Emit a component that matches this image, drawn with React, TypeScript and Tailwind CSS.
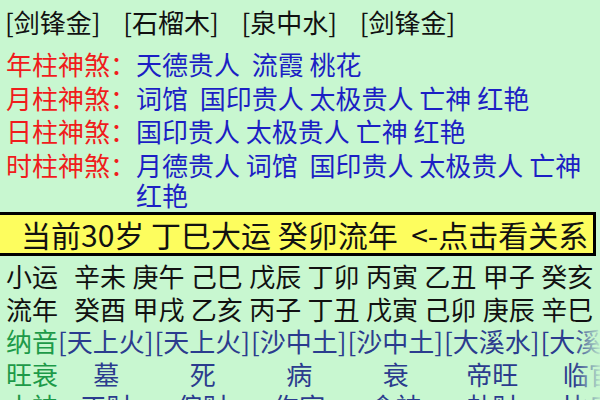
const nayin = ['[剑锋金]', '[石榴木]', '[泉中水]', '[剑锋金]']

const shensha = [
  { label: '年柱神煞：', text: '天德贵人  流霞 桃花' },
  { label: '月柱神煞：', text: '词馆  国印贵人 太极贵人 亡神 红艳' },
  { label: '日柱神煞：', text: '国印贵人 太极贵人 亡神 红艳' },
  { label: '时柱神煞：', text: '月德贵人 词馆  国印贵人 太极贵人 亡神 红艳' },
]

const xiaoyun = ['辛未', '庚午', '己巳', '戊辰', '丁卯', '丙寅', '乙丑', '甲子', '癸亥']
const liunian = ['癸酉', '甲戌', '乙亥', '丙子', '丁丑', '戊寅', '己卯', '庚辰', '辛巳']
const nayinRow = ['[天上火]', '[天上火]', '[沙中土]', '[沙中土]', '[大溪水]', '[大溪水]']
const wangshuai = ['墓', '死', '病', '衰', '帝旺', '临官']
const shishen = ['正财', '偏财', '伤官', '食神', '劫财', '比肩']

function GanzhiRow({ label, items }: { label: string; items: string[] }) {
  return (
    <div className="flex pl-[6px] whitespace-nowrap">
      <span className="w-[68px] shrink-0">{label}</span>
      {items.map((s, i) => (
        <span key={i} className="w-[58.4px] shrink-0">
          {s}
        </span>
      ))}
    </div>
  )
}

function TableRow({ label, items, center }: { label: string; items: string[]; center?: boolean }) {
  return (
    <div className="flex pl-[6px] whitespace-nowrap">
      <span className="w-[52px] shrink-0 text-[#1d9a48]">{label}</span>
      {items.map((s, i) => (
        <span
          key={i}
          className={`w-[96.5px] shrink-0 text-[#2b3c8e] ${center ? 'text-center' : 'text-left'}`}
        >
          {s}
        </span>
      ))}
    </div>
  )
}

export default function App() {
  return (
    <div className="w-[600px] h-[400px] overflow-hidden bg-[#c8f7d0] font-['Noto_Sans_CJK_SC','Liberation_Sans',sans-serif] text-[26px] leading-[30px] text-[#111] pt-[7px]">
      {/* 纳音 */}
      <div className="flex gap-[22.7px] pl-[5px] whitespace-nowrap">
        {nayin.map((n, i) => (
          <span key={i}>{n}</span>
        ))}
      </div>

      {/* 神煞 */}
      <div className="mt-[12px] flex flex-col gap-[3.7px]">
        {shensha.map((r) => (
          <div key={r.label} className="flex pl-[6px]">
            <span className="shrink-0 text-[#f01c1c]">{r.label}</span>
            <span className="flex-1 whitespace-pre-wrap text-[#1c1fc4]">{r.text}</span>
          </div>
        ))}
      </div>

      {/* 大运 bar */}
      <div className="mt-[2px] w-[596px] h-[44px] border-y-[3px] border-r-[3px] border-black bg-[#fdfd5e] flex items-center pl-[21px] text-[30px] whitespace-pre">
        当前30岁 丁巳大运 癸卯流年  &lt;-点击看关系
      </div>

      {/* lower table */}
      <div className="mt-[4px] leading-[32.5px]">
        <GanzhiRow label="小运" items={xiaoyun} />
        <GanzhiRow label="流年" items={liunian} />
        <div className="relative overflow-hidden">
          <TableRow label="纳音" items={nayinRow} />
          <TableRow label="旺衰" items={wangshuai} center />
          <TableRow label="十神" items={shishen} center />
          <div className="absolute right-0 top-0 bottom-0 w-[26px] bg-linear-to-r from-transparent to-[#c8f7d0]/90" />
        </div>
      </div>
    </div>
  )
}
